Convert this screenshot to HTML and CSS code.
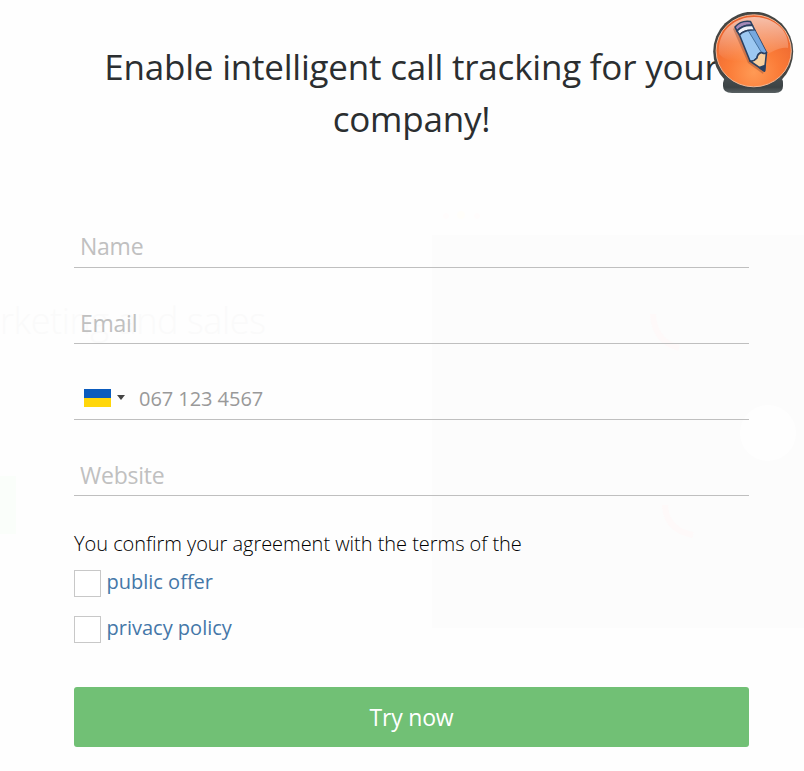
FILE: index.html
```html
<!DOCTYPE html>
<html lang="en">
<head>
    <meta charset="UTF-8">
    <meta name="viewport" content="width=device-width, initial-scale=1.0">
    <title>Call tracking</title>
    <link rel="stylesheet" href="styles.css">
</head>
<body>
    <!-- Page under the popup -->
    <div class="page-behind" aria-hidden="true">
        <div class="behind-panel"></div>
        <div class="behind-circle"></div>
        <div class="behind-button"></div>
        <svg class="behind-marks" width="804" height="771" viewBox="0 0 804 771">
            <g fill="none" stroke="#fef9f9" stroke-width="6">
                <path d="M653 314q1 27 26 34"/>
                <path d="M665 505q1 25 28 30"/>
            </g>
            <circle cx="446" cy="216" r="3" fill="#fffcfc"/>
            <circle cx="461" cy="215" r="4" fill="#fffefa"/>
            <circle cx="477" cy="216" r="3" fill="#fffcfc"/>
        </svg>
        <div class="behind-title">rketing and sales</div>
    </div>

    <div class="popup">
        <h1>Enable intelligent call tracking for your company!</h1>
        <form id="trialForm">
            <input class="field name-input" type="text" name="name" placeholder="Name">
            <input class="field" type="email" name="email" placeholder="Email">
            <div class="phone">
                <span class="flag"></span>
                <span class="arrow"></span>
                <input class="field phone-input" type="tel" name="phone" placeholder="067 123 4567">
            </div>
            <input class="field" type="text" name="website" placeholder="Website">
            <p class="agreement">You confirm your agreement with the terms of the</p>
            <div class="check">
                <input type="checkbox" id="offer">
                <a href="#">public offer</a>
            </div>
            <div class="check">
                <input type="checkbox" id="privacy">
                <a href="#">privacy policy</a>
            </div>
            <button type="submit">Try now</button>
        </form>
    </div>

    <svg class="badge" width="84" height="84" viewBox="0 0 84 84">
        <defs>
            <radialGradient id="orange" cx="0.5" cy="0.8" r="0.75">
                <stop offset="0" stop-color="#ff9a55"/>
                <stop offset="0.45" stop-color="#fb7c38"/>
                <stop offset="1" stop-color="#ea632e"/>
            </radialGradient>
            <linearGradient id="shine" x1="0" y1="0" x2="0" y2="1">
                <stop offset="0" stop-color="#fff" stop-opacity="0.6"/>
                <stop offset="1" stop-color="#fff" stop-opacity="0"/>
            </linearGradient>
            <linearGradient id="base" x1="0" y1="0" x2="0" y2="1">
                <stop offset="0" stop-color="#4a5153"/>
                <stop offset="0.7" stop-color="#3c4345"/>
                <stop offset="1" stop-color="#596163"/>
            </linearGradient>
        </defs>
        <circle cx="41.2" cy="39.6" r="40" fill="#454644"/>
        <path d="M17 62h49q5 4 5 9v3q0 7-8 7H20q-9 0-9-7v-3q1-6 6-9z" fill="url(#base)"/>
        <ellipse cx="41.7" cy="38.8" rx="37.6" ry="36" fill="url(#orange)" stroke="#f3b896" stroke-width="1"/>
        <path d="M7 42C5 20 22 5 42 5S78 19 76 36C64 34 55 45 42 48C28 51 14 50 7 42z" fill="url(#shine)"/>
        <path d="M21 17L36 51l15 11 1-4L38 12q-10-3-17 5z" fill="#783f32" opacity="0.35"/>
        <g stroke="#2b4162" stroke-width="1.6" stroke-linejoin="round">
            <path d="M23 15Q29 8 38.500 9.500L40.500 13.500Q31 12.500 25 19z" fill="#a58ab8"/>
            <path d="M25 19Q31 12.500 40.500 13.500L43 18.500Q33 17 27.500 23z" fill="#f1f3fa"/>
            <path d="M27.500 23Q33 17 43 18.500L54.500 40.500Q52.500 42.500 49.500 40.500Q45.500 41.500 45 46Q41.500 50 38 49z" fill="#9cc8f2"/>
            <path d="M43 18.500L54.500 40.500Q52.500 42.500 49.500 40.500L36.500 19z" fill="#76a8df" stroke="none"/>
            <path d="M36.500 19L49.500 40.500" fill="none" stroke="#45729f" stroke-width="1"/>
            <path d="M38 49Q41.500 50 45 46Q45.500 41.500 49.500 40.500Q52.500 42.500 54.500 40.500L52.500 59z" fill="#f8cf9d"/>
            <path d="M47.500 55.500l5.500-2-.5 5.500z" fill="#2b4162"/>
        </g>
    </svg>
</body>
</html>
```

FILE: styles.css
```css
* {
    box-sizing: border-box;
}
body {
    margin: 0;
    height: 771px;
    overflow: hidden;
    position: relative;
    background-color: #fefefe;
    color: #2b2e30;
    font-family: "Open Sans", sans-serif;
}
.popup {
    position: relative;
    width: 675px;
    margin-left: 74px;
    padding-top: 41px;
}
h1 {
    margin: 0 0 81px;
    font-size: 35px;
    font-weight: 400;
    letter-spacing: -0.22px;
    line-height: 52px;
    text-align: center;
}
form {
    display: flex;
    flex-direction: column;
}
.field {
    width: 100%;
    height: 42px;
    margin: 0 0 34px;
    padding: 0 6px;
    border: 0;
    border-bottom: 1px solid #bfbfbf;
    outline: none;
    background: transparent;
    font-family: inherit;
    font-size: 23px;
    letter-spacing: -0.25px;
}
.name-input {
    padding-bottom: 2px;
}
.field::placeholder {
    color: #c0c0c0;
    opacity: 1;
}
.phone {
    display: flex;
    align-items: center;
    height: 42px;
    margin-bottom: 34px;
    padding-left: 10px;
    border-bottom: 1px solid #bfbfbf;
}
.phone-input {
    flex: 1;
    height: 41px;
    margin: 0;
    border: 0;
    padding: 0 0 0 14px;
    font-size: 20px;
    letter-spacing: -0.05px;
}
.phone-input::placeholder {
    color: #999;
}
.flag {
    width: 27px;
    height: 18px;
    margin: 0 6px 2px 0;
    background: linear-gradient(#0b5bbd 50%, #ffd60a 50%);
}
.arrow {
    margin-bottom: 2px;
    border: 4px solid transparent;
    border-top: 5px solid #444;
    border-bottom: 0;
}
.agreement {
    margin: 0 0 12px;
    color: #000;
    font-size: 20px;
    font-weight: 300;
    letter-spacing: -0.04px;
    line-height: 28px;
}
.check {
    display: flex;
    align-items: center;
    height: 27px;
    margin-bottom: 19px;
    font-size: 20px;
}
.check input {
    appearance: none;
    width: 27px;
    height: 27px;
    margin: 0 5.5px 0 0;
    border: 1px solid #c8c8c8;
    background: #fff;
}
.check a {
    margin-top: -5px;
    color: #4477a8;
    text-decoration: none;
}
button {
    height: 60px;
    margin-top: 25px;
    border: 0;
    border-radius: 3px;
    background-color: #71c075;
    color: #fff;
    font-family: inherit;
    font-size: 23px;
    letter-spacing: -0.2px;
    cursor: pointer;
}
.badge {
    position: absolute;
    top: 12px;
    left: 712px;
}

/* Faded page behind the popup */
.page-behind {
    position: absolute;
    inset: 0;
}
.behind-panel {
    position: absolute;
    top: 235px;
    left: 432px;
    right: 0;
    height: 393px;
    background: #fcfcfc;
}
.behind-circle {
    position: absolute;
    top: 405px;
    left: 740px;
    width: 56px;
    height: 56px;
    border-radius: 50%;
    background: #fefefe;
}
.behind-button {
    position: absolute;
    top: 476px;
    left: 0;
    width: 16px;
    height: 58px;
    background: #fafefa;
}
.behind-marks {
    position: absolute;
    top: 0;
    left: 0;
}
.behind-title {
    position: absolute;
    top: 297px;
    left: 0;
    color: #fafafa;
    font-size: 36px;
    font-weight: 300;
    letter-spacing: -0.4px;
    line-height: 48px;
    white-space: nowrap;
}
```
